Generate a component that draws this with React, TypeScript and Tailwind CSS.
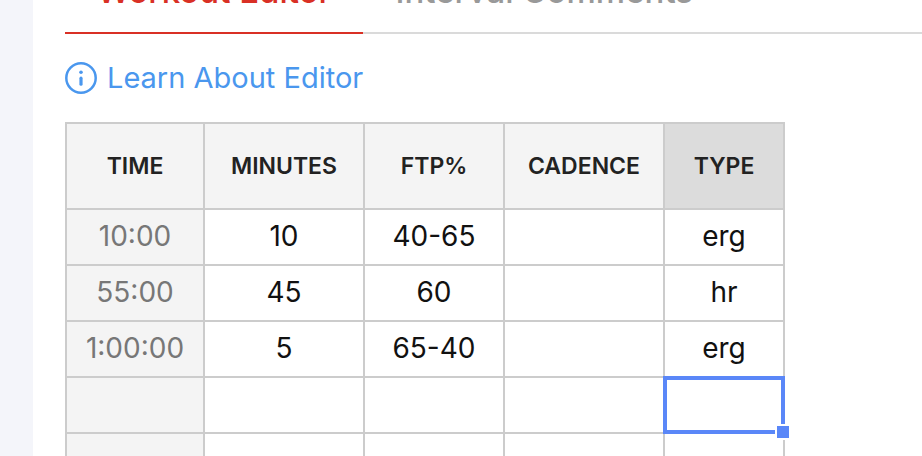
import { useState } from 'react';

const tabs = ['Workout Editor', 'Interval Comments'];

const columns = [
  { label: 'TIME', width: 'w-[138px]' },
  { label: 'MINUTES', width: 'w-[160px]' },
  { label: 'FTP%', width: 'w-[140px]' },
  { label: 'CADENCE', width: 'w-[160px]' },
  { label: 'TYPE', width: 'w-[120px]' },
];

const rows = [
  ['10:00', '10', '40-65', '', 'erg'],
  ['55:00', '45', '60', '', 'hr'],
  ['1:00:00', '5', '65-40', '', 'erg'],
  ['', '', '', '', ''],
  ['', '', '', '', ''],
];

const InfoIcon = () => (
  <svg viewBox="0 0 32 32" className="w-8 h-8 shrink-0" fill="none" aria-hidden="true">
    <circle cx="16" cy="16" r="14.7" stroke="currentColor" strokeWidth="2.5" />
    <circle cx="16" cy="10.3" r="1.8" fill="currentColor" />
    <path d="M16 16.2v6" stroke="currentColor" strokeWidth="3.2" strokeLinecap="round" />
  </svg>
);

const App = () => {
  const [activeTab, setActiveTab] = useState(0);
  const [selected, setSelected] = useState({ row: 3, col: 4 });

  return (
    <div className="h-screen overflow-hidden bg-[#f4f5fa] pl-[33px] font-['Inter',sans-serif]">
      <main className="min-h-full bg-white pl-8">
        {/* Tabs */}
        <div className="flex h-[34px] items-end overflow-hidden">
          {tabs.map((tab, index) => (
            <button
              key={tab}
              type="button"
              onClick={() => setActiveTab(index)}
              className={`h-[72px] shrink-0 whitespace-nowrap border-b-2 px-8 pb-3 text-[33px] leading-[40px] font-medium ${
                index === activeTab
                  ? 'border-[#d93025] text-[#d93025]'
                  : 'border-[#dadada] text-[#999999]'
              }`}
            >
              {tab}
            </button>
          ))}
          <div className="h-[72px] flex-1 border-b-2 border-[#dadada]" />
        </div>

        {/* Help link */}
        <a
          href="#editor-help"
          className="mt-6 flex h-10 w-fit items-center gap-[10px] text-[29px] leading-[40px] text-[#4a97ee]"
        >
          <InfoIcon />
          Learn About Editor
        </a>

        {/* Interval sheet */}
        <table className="mt-6 w-[720px] table-fixed border-separate border-spacing-0 border-t-2 border-l-2 border-[#cccccc] text-center">
          <thead>
            <tr className="h-[86px]">
              {columns.map((column, index) => (
                <th
                  key={column.label}
                  scope="col"
                  className={`border-r-2 border-b-2 border-[#cccccc] p-0 text-[23px] leading-[36px] font-semibold text-[#222222] ${column.width} ${
                    index === selected.col ? 'bg-[#dcdcdc]' : 'bg-[#f4f4f4]'
                  }`}
                >
                  {column.label}
                </th>
              ))}
            </tr>
          </thead>
          <tbody>
            {rows.map((row, rowIndex) => (
              <tr key={rowIndex} className="h-14">
                {row.map((value, colIndex) => (
                  <td
                    key={colIndex}
                    onClick={() => setSelected({ row: rowIndex, col: colIndex })}
                    className={`relative border-r-2 border-b-2 border-[#cccccc] p-0 pb-0.5 text-[28px] leading-[40px] ${
                      colIndex === 0 ? 'bg-[#f4f4f4] text-[#777777]' : 'bg-white text-[#111111]'
                    }`}
                  >
                    {value}
                    {rowIndex === selected.row && colIndex === selected.col && (
                      <div className="absolute -inset-0.5 z-10 border-4 border-[#5a87f8]">
                        <span className="absolute -right-[10px] -bottom-[10px] h-4 w-4 border-2 border-white bg-[#5a87f8]" />
                      </div>
                    )}
                  </td>
                ))}
              </tr>
            ))}
          </tbody>
        </table>
      </main>
    </div>
  );
};

export default App;
